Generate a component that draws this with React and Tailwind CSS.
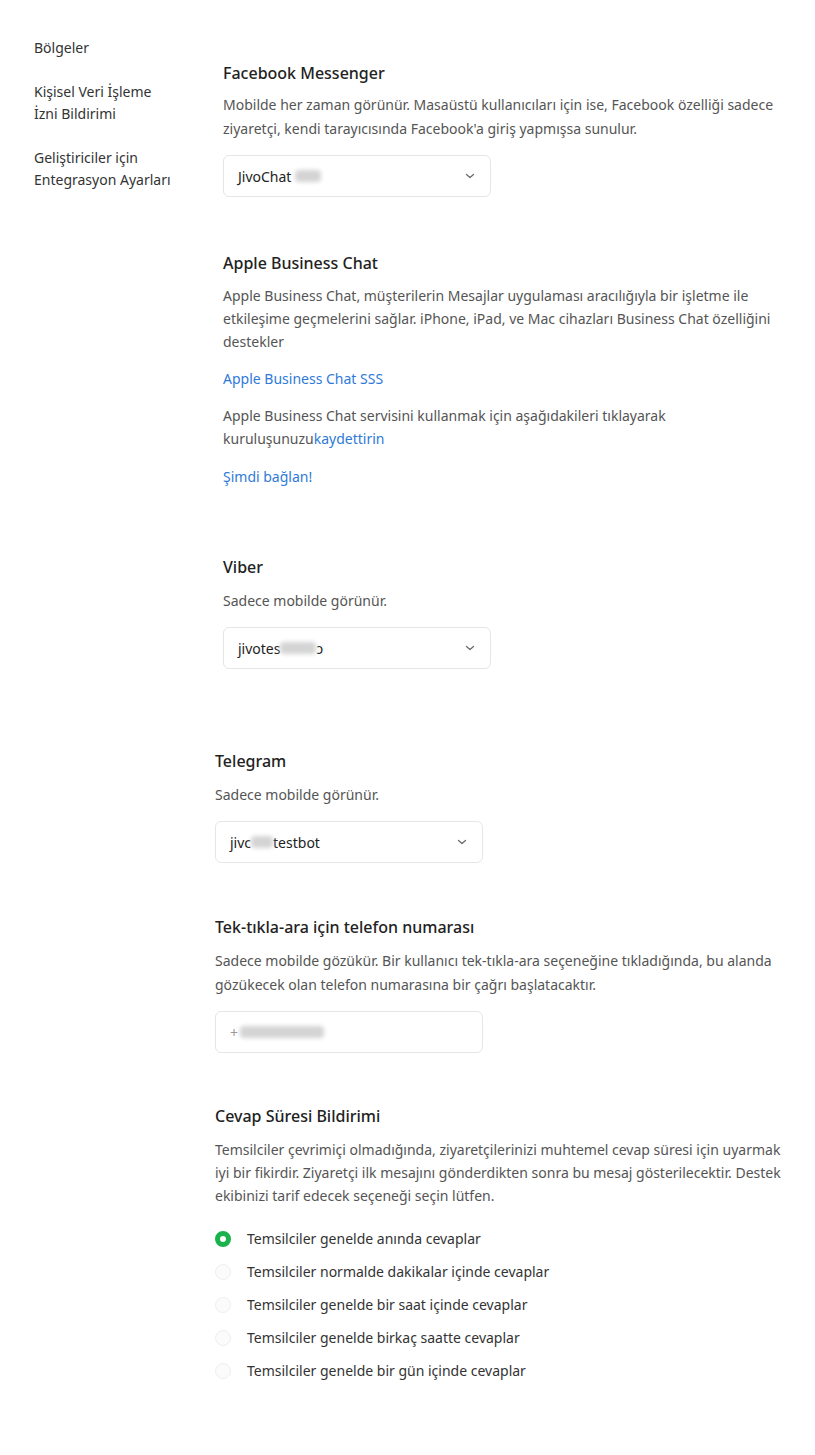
const FONT = { fontFamily: '"Noto Sans", "Open Sans", sans-serif' };

function Chevron() {
  return (
    <svg width="12" height="8" viewBox="0 0 12 8" fill="none" className="text-[#6b6b6b]">
      <path d="M2.5 2.5l3.5 3 3.5-3" stroke="currentColor" strokeWidth="1.3" strokeLinecap="round" strokeLinejoin="round" />
    </svg>
  );
}

function Select({ children }) {
  return (
    <div className="mt-[14px] flex h-[42px] w-[268px] items-center justify-between rounded-md border border-[#e6e6e6] bg-white pl-[14px] pr-[14px] text-[14px] text-[#222]">
      <span className="flex items-center">{children}</span>
      <Chevron />
    </div>
  );
}

function Blur({ w }) {
  return <span className={`inline-block h-[12px] rounded-sm bg-[#d4d4d4] blur-[2px] ${w}`} />;
}

function Heading({ children, tight }) {
  return (
    <h3 className={`${tight ? 'mb-2' : 'mb-[10px]'} text-[16px] font-medium leading-6 text-[#222]`}>
      {children}
    </h3>
  );
}

function Desc({ lines, leading = 'leading-6' }) {
  return (
    <p className={`text-[14px] ${leading} text-[#555]`}>
      {lines.map((l, i) => (
        <span key={i} className="block whitespace-nowrap">{l}</span>
      ))}
    </p>
  );
}

const options = [
  'Temsilciler genelde anında cevaplar',
  'Temsilciler normalde dakikalar içinde cevaplar',
  'Temsilciler genelde bir saat içinde cevaplar',
  'Temsilciler genelde birkaç saatte cevaplar',
  'Temsilciler genelde bir gün içinde cevaplar',
];

export default function App() {
  return (
    <div className="flex min-h-[1455px] bg-white" style={FONT}>
      <aside className="w-[215px] shrink-0 pl-[34px] pt-[37px] text-[14px] leading-[22px] text-[#333]">
        <ul className="flex flex-col gap-[22px]">
          <li>Bölgeler</li>
          <li>Kişisel Veri İşleme<br />İzni Bildirimi</li>
          <li>Geliştiriciler için<br />Entegrasyon Ayarları</li>
        </ul>
      </aside>

      <main className="flex-1 pt-[61px] pb-10">
        <div className="pl-2">
          <section>
            <Heading tight>Facebook Messenger</Heading>
            <Desc
              lines={[
                'Mobilde her zaman görünür. Masaüstü kullanıcıları için ise, Facebook özelliği sadece',
                "ziyaretçi, kendi tarayıcısında Facebook'a giriş yapmışsa sunulur.",
              ]}
            />
            <Select>
              JivoChat&nbsp;<Blur w="w-[26px]" />
            </Select>
          </section>

          <section className="mt-[54px]">
            <h3 className="mb-[9px] text-[16px] font-medium leading-6 text-[#222]">Apple Business Chat</h3>
            <Desc
              leading="leading-[23px]"
              lines={[
                'Apple Business Chat, müşterilerin Mesajlar uygulaması aracılığıyla bir işletme ile',
                'etkileşime geçmelerini sağlar. iPhone, iPad, ve Mac cihazları Business Chat özelliğini',
                'destekler',
              ]}
            />
            <a className="mt-[14px] block text-[14px] leading-6 text-[#2f7ad8]">Apple Business Chat SSS</a>
            <p className="mt-[13px] text-[14px] leading-[23px] text-[#555]">
              Apple Business Chat servisini kullanmak için aşağıdakileri tıklayarak
              <br />
              kuruluşunuzu<a className="text-[#2f7ad8]">kaydettirin</a>
            </p>
            <a className="mt-[15px] block text-[14px] leading-6 text-[#2f7ad8]">Şimdi bağlan!</a>
          </section>

          <section className="mt-[66px]">
            <Heading>Viber</Heading>
            <Desc lines={['Sadece mobilde görünür.']} />
            <Select>
              jivotes<Blur w="w-[36px]" />ɔ
            </Select>
          </section>
        </div>

        <section className="mt-[80px]">
          <Heading>Telegram</Heading>
          <Desc lines={['Sadece mobilde görünür.']} />
          <Select>
            jivc<Blur w="w-[22px]" />testbot
          </Select>
        </section>

        <section className="mt-[52px]">
          <Heading>Tek-tıkla-ara için telefon numarası</Heading>
          <Desc
            lines={[
              'Sadece mobilde gözükür. Bir kullanıcı tek-tıkla-ara seçeneğine tıkladığında, bu alanda',
              'gözükecek olan telefon numarasına bir çağrı başlatacaktır.',
            ]}
          />
          <div className="mt-[14px] flex h-[42px] w-[268px] items-center rounded-md border border-[#e6e6e6] bg-white pl-[14px] text-[14px] text-[#222]">
            <span className="text-[#999]">+</span>
            <Blur w="w-[84px] ml-0.5" />
          </div>
        </section>

        <section className="mt-[51px]">
          <Heading>Cevap Süresi Bildirimi</Heading>
          <Desc
            leading="leading-[23px]"
            lines={[
              'Temsilciler çevrimiçi olmadığında, ziyaretçilerinizi muhtemel cevap süresi için uyarmak',
              'iyi bir fikirdir. Ziyaretçi ilk mesajını gönderdikten sonra bu mesaj gösterilecektir. Destek',
              'ekibinizi tarif edecek seçeneği seçin lütfen.',
            ]}
          />
          <ul className="mt-[15px] flex flex-col">
            {options.map((o, i) => (
              <li key={o} className="flex h-[33px] items-center gap-[16px] text-[14px] text-[#333]">
                {i === 0 ? (
                  <span className="h-4 w-4 rounded-full border-[5px] border-[#19b24b] bg-white" />
                ) : (
                  <span className="h-4 w-4 rounded-full border border-[#efefef] bg-[#fbfbfb]" />
                )}
                {o}
              </li>
            ))}
          </ul>
        </section>
      </main>
    </div>
  );
}
